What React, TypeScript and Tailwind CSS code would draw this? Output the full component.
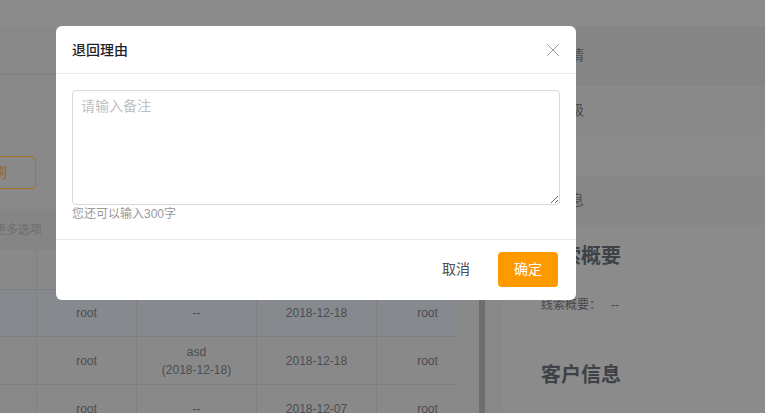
import React from "react";

const font = { fontFamily: '"Liberation Sans", "Noto Sans CJK SC", sans-serif' };

function Cell({ w, children, last }: { w: string; children?: React.ReactNode; last?: boolean }) {
  return (
    <div className={`${w} shrink-0 h-full flex flex-col items-center justify-center text-[12px] leading-[18px] text-[#4a4d51] ${last ? "" : "border-r border-[#7f7f7f]"}`}>
      {children}
    </div>
  );
}

function Row({ h, bg, cells }: { h: string; bg: string; cells: React.ReactNode[] }) {
  return (
    <div className={`flex shrink-0 ${h} ${bg} border-b border-[#7f7f7f] w-[458px]`}>
      <Cell w="w-[37px]">{cells[0]}</Cell>
      <Cell w="w-[100px]">{cells[1]}</Cell>
      <Cell w="w-[120px]">{cells[2]}</Cell>
      <Cell w="w-[120px]">{cells[3]}</Cell>
      <Cell w="w-[81px]" last>
        <span className="pl-[20px]">{cells[4]}</span>
      </Cell>
    </div>
  );
}

export default function App() {
  return (
    <div className="relative w-[765px] h-[413px] overflow-hidden bg-[#898989]" style={font}>
      {/* page under overlay */}
      <div className="h-[26px] bg-[#8b8b8b]" />
      <div className="flex h-[387px] overflow-hidden">
        {/* left */}
        <div className="w-[479px] shrink-0 flex flex-col overflow-hidden">
          <div className="h-[49px] shrink-0 border-b border-[#7f7f7f] bg-[#888888]" />
          <div className="h-[81px] shrink-0" />
          <div className="h-[33px] shrink-0 w-[96px] ml-[-60px] border border-[#a6732f] rounded-[4px] flex items-center justify-end pr-[28px] text-[14px] text-[#8f6330]">
            刷
          </div>
          <div className="h-[20px] shrink-0" />
          <div className="h-[41px] shrink-0 bg-[#858585] flex items-center text-[12px] text-[#6d6d6d] ml-[-6px]">
            更多选项
          </div>
          <Row h="h-[40px]" bg="bg-[#898989]" cells={[null, null, null, null, null]} />
          <Row h="h-[47px]" bg="bg-[#868a8e]" cells={[null, "root", "--", "2018-12-18", "root"]} />
          <Row
            h="h-[48px]"
            bg="bg-[#898989]"
            cells={[
              null,
              "root",
              <>
                <span>asd</span>
                <span>(2018-12-18)</span>
              </>,
              "2018-12-18",
              "root",
            ]}
          />
          <Row h="h-[48px]" bg="bg-[#898989]" cells={[null, "root", "--", "2018-12-07", "root"]} />
        </div>
        <div className="w-[6px] shrink-0 bg-[#6e6e6e]" />
        <div className="w-[17px] shrink-0 bg-[#888888]" />
        {/* right panel */}
        <div className="flex-1 bg-[#8b8b8b] flex flex-col">
          <div className="h-[59px] shrink-0 bg-[#858585] border-b border-[#828282] flex items-center pl-[26px] text-[14px] text-[#4a4d51]">
            线索详情
          </div>
          <div className="h-[50px] shrink-0 bg-[#898989] flex items-center pl-[26px] text-[14px] text-[#4a4d51]">
            线索等级
          </div>
          <div className="h-[40px] shrink-0 bg-[#8a8a8a]" />
          <div className="h-[50px] shrink-0 bg-[#878787] flex items-center pl-[26px] text-[14px] text-[#4a4d51]">
            联系信息
          </div>
          <div className="pl-[39px]">
            <div className="mt-[18px] text-[20px] leading-[26px] font-bold text-[#3e4146]">线索概要</div>
            <div className="mt-[28px] text-[12px] leading-[16px] text-[#44474c]">
              线索概要：<span className="ml-[10px]">--</span>
            </div>
            <div className="mt-[49px] text-[20px] leading-[26px] font-bold text-[#3e4146]">客户信息</div>
          </div>
        </div>
      </div>

      {/* modal */}
      <div className="absolute left-[56px] top-[26px] w-[520px] h-[274px] bg-white rounded-[6px] flex flex-col">
        <div className="h-[48px] px-[16px] flex items-center justify-between border-b border-[#e8e8e8]">
          <span className="text-[14px] font-medium text-[#1f2329]" style={{ fontFamily: '"Noto Sans CJK SC", sans-serif' }}>
            退回理由
          </span>
          <svg width="14" height="14" viewBox="0 0 14 14">
            <path d="M1 1 L13 13 M13 1 L1 13" stroke="#a0a0a0" strokeWidth="1" fill="none" />
          </svg>
        </div>
        <div className="px-[16px] pt-[16px] pb-[17px] flex flex-col">
          <textarea
            className="w-full h-[115px] border border-[#d9d9d9] rounded-[4px] px-[8px] py-[4px] text-[14px] leading-[20px] outline-none placeholder:text-[#c0c0c0]"
            placeholder="请输入备注"
            style={{ fontFamily: '"Noto Sans CJK SC", sans-serif' }}
          />
          <div className="mt-[1px] text-[12px] leading-[16px] text-[#999999]">您还可以输入300字</div>
        </div>
        <div className="flex-1 border-t border-[#e8e8e8] flex items-start justify-end pt-[12px] pr-[18px] gap-[12px]">
          <button className="w-[60px] h-[35px] text-[14px] text-[#4a4d51]">取消</button>
          <button className="w-[60px] h-[35px] rounded-[4px] bg-[#ff9900] text-[14px] text-white">确定</button>
        </div>
      </div>
    </div>
  );
}
